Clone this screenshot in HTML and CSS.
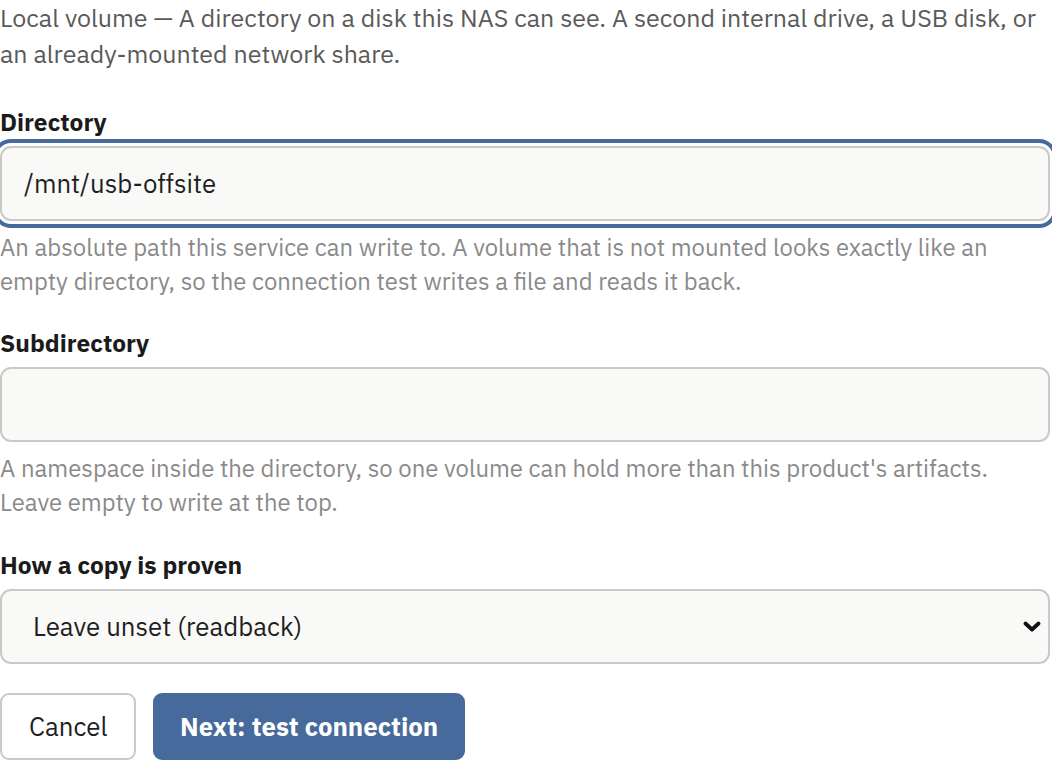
FILE: index.html
```html
<!DOCTYPE html>
<html lang="en">
<head>
<meta charset="utf-8">
<title>Local volume</title>
<link rel="stylesheet" href="styles.css">
</head>
<body>
<form class="form">
  <p class="intro">Local volume — A directory on a disk this NAS can see. A second internal drive, a USB disk, or an already-mounted network share.</p>

  <div class="field">
    <label class="label" for="dir">Directory</label>
    <input class="input is-focused" id="dir" type="text" value="/mnt/usb-offsite">
    <p class="help">An absolute path this service can write to. A volume that is not mounted looks exactly like an empty directory, so the connection test writes a file and reads it back.</p>
  </div>

  <div class="field">
    <label class="label" for="sub">Subdirectory</label>
    <input class="input" id="sub" type="text" value="">
    <p class="help">A namespace inside the directory, so one volume can hold more than this product's artifacts. Leave empty to write at the top.</p>
  </div>

  <div class="field">
    <label class="label" for="proof">How a copy is proven</label>
    <div class="select-wrap">
      <select class="input select" id="proof">
        <option>Leave unset (readback)</option>
      </select>
      <svg class="chevron" viewBox="0 0 18 11" width="18" height="11" aria-hidden="true"><path d="M2.5 2.5 L9 8.5 L15.5 2.5" fill="none" stroke="#111" stroke-width="3.8" stroke-linecap="round" stroke-linejoin="round"/></svg>
    </div>
  </div>

  <div class="actions">
    <button type="button" class="btn btn-secondary">Cancel</button>
    <button type="button" class="btn btn-primary">Next: test connection</button>
  </div>
</form>
</body>
</html>
```

FILE: styles.css
```css
html, body {
  margin: 0;
  padding: 0;
  background: #ffffff;
}

body {
  font-family: "IBM Plex Sans", "Noto Sans", "Liberation Sans", sans-serif;
  color: #1b1b1b;
  overflow: hidden;
}

.form {
  display: flex;
  flex-direction: column;
  width: 1050px;
}

.intro {
  margin: 0 0 6px;
  font-size: 25px;
  line-height: 35.5px;
  color: #5a5a5a;
}

.field {
  margin-top: 29.5px;
}

.label {
  display: block;
  font-size: 24.5px;
  font-weight: 700;
  line-height: 30px;
  color: #1b1b1b;
  margin-bottom: 9px;
}

.input {
  display: block;
  box-sizing: border-box;
  width: 100%;
  height: 75px;
  margin: 0;
  padding: 0 22px;
  border: 2px solid #c9c9c5;
  border-radius: 11px;
  background: #f9f9f7;
  font-family: inherit;
  font-size: 25.8px;
  color: #1e1e1e;
}

.is-focused {
  outline: 4px solid #466a9b;
  outline-offset: 3px;
}

.help {
  max-width: 1040px;
  margin: 10px 0 0;
  font-size: 23.9px;
  line-height: 34px;
  color: #8a8a8a;
}

.select-wrap {
  position: relative;
}

.select {
  appearance: none;
  -webkit-appearance: none;
  padding-left: 31px;
}

.chevron {
  position: absolute;
  right: 9px;
  top: 32px;
  pointer-events: none;
}

.actions {
  display: flex;
  gap: 17px;
  margin-top: 29px;
}

.btn {
  height: 67px;
  border-radius: 9px;
  font-family: inherit;
  font-size: 25.8px;
  cursor: pointer;
}

.btn-secondary {
  padding: 0 27px;
  background: #ffffff;
  border: 2px solid #c9c9c5;
  color: #1e1e1e;
}

.btn-primary {
  padding: 0 24.5px;
  background: #466a9b;
  border: 2px solid #466a9b;
  color: #ffffff;
  font-weight: 700;
}
```
